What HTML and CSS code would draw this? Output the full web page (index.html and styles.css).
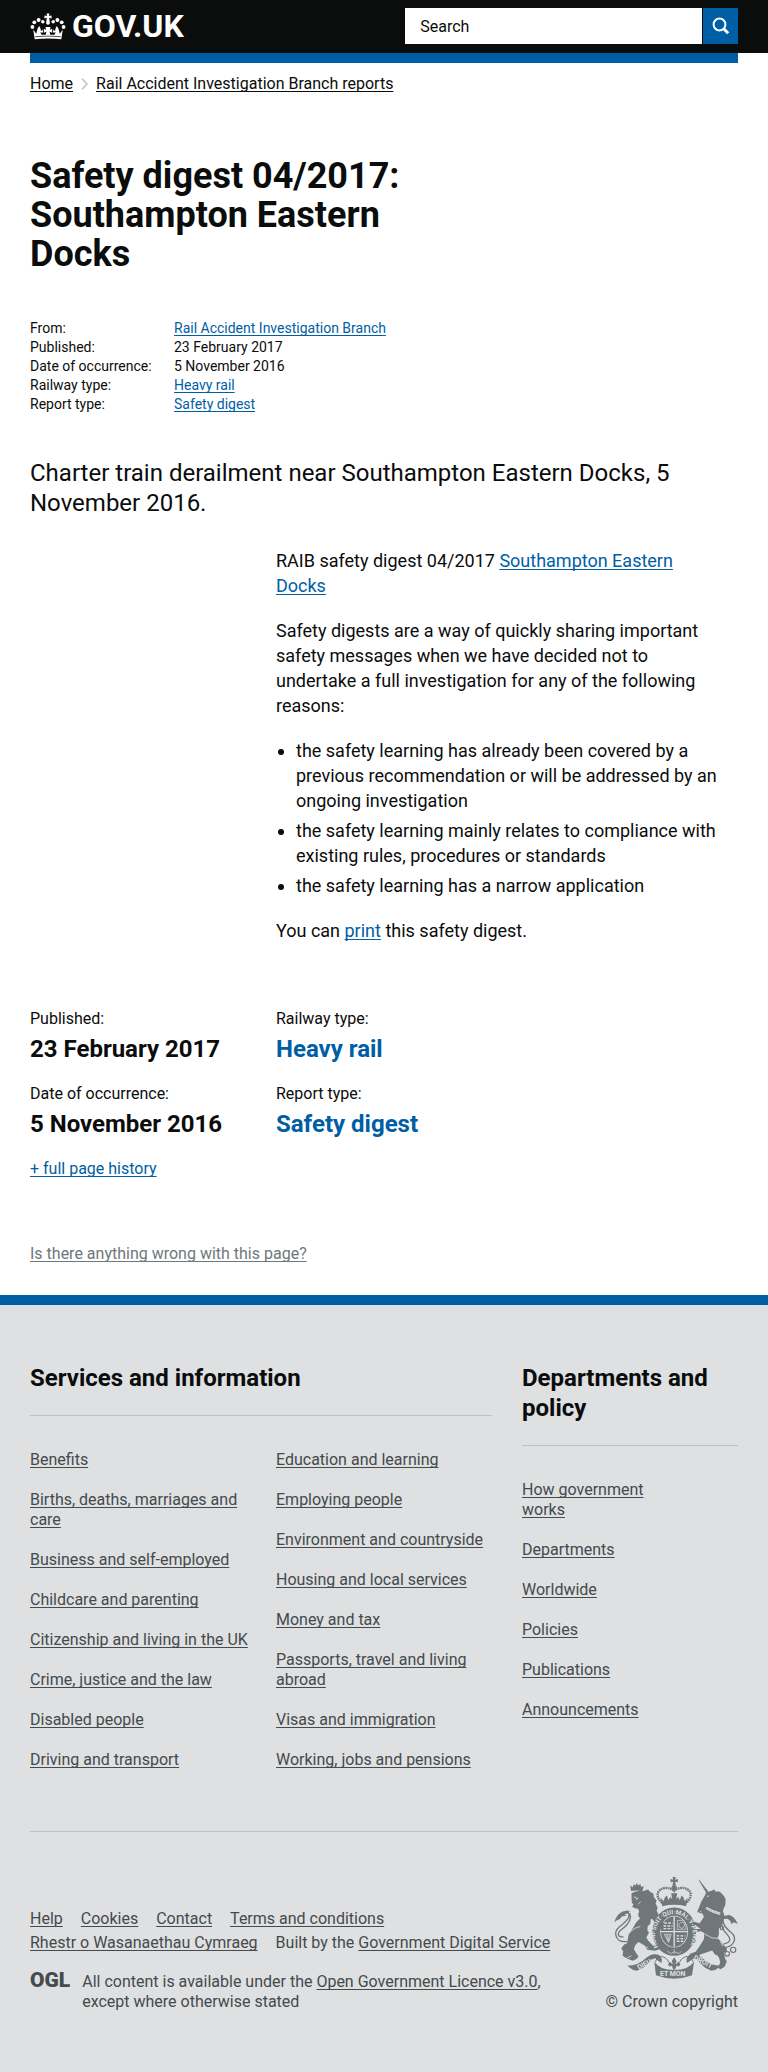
FILE: index.html
```html
<!DOCTYPE html>
<html lang="en">
<head>
<meta charset="utf-8">
<meta name="viewport" content="width=device-width, initial-scale=1">
<title>Safety digest 04/2017: Southampton Eastern Docks - GOV.UK</title>
<link rel="stylesheet" href="styles.css">
</head>
<body>
<header class="site-header">
  <div class="wrap header-inner">
    <a class="logo" href="#">
      <svg class="crown" viewBox="0 0 36 27" aria-hidden="true">
        <g fill="currentColor">
          <circle cx="2.4" cy="14" r="1.9"/><circle cx="4.3" cy="9.3" r="1.9"/><circle cx="8.6" cy="6.9" r="2"/><circle cx="12.8" cy="8.7" r="1.7"/>
          <circle cx="33.6" cy="14" r="1.9"/><circle cx="31.7" cy="9.3" r="1.9"/><circle cx="27.4" cy="6.9" r="2"/><circle cx="23.2" cy="8.7" r="1.7"/>
          <path d="M16.5.5h3l-.6 2.6 2.7-.7v3l-2.5-.6.7 4.5a1.9 1.9 0 1 1-3.6 0l.7-4.5-2.5.6v-3l2.7.7z"/>
          <path d="M3.2 16.5l3 4.2 1.4-5.2 1.6-2.5 1.3 2.6.4 2.5 2-1.4v3l-2.5-.5 1.1 2.6h4.2l.6-3.1-2.5 1v-4l2.3 1-.6-2.7h5l-.6 2.7 2.3-1v4l-2.5-1 .6 3.1h4.2l1.1-2.6-2.5.5v-3l2 1.4.4-2.5 1.3-2.6 1.6 2.5 1.4 5.2 3-4.2-1.5 9.7Q18 24.700 4.700 26.200z"/>
        </g>
        <path d="M5.200 23.700Q18 22.500 30.800 23.700" stroke="#0b0c0c" stroke-width=".7" fill="none"/>
      </svg>
      <span>GOV.UK</span>
    </a>
    <form class="search" role="search">
      <input type="search" aria-label="Search" placeholder="Search">
      <button type="button" aria-label="Search">
        <svg viewBox="0 0 18 18" aria-hidden="true"><circle cx="7.500" cy="7.500" r="5.900"/><path d="M11.500 11.500L16.200 16.200" class="handle"/></svg>
      </button>
    </form>
  </div>
</header>
<div class="wrap">
  <div class="header-bar"></div>
  <nav class="breadcrumbs" aria-label="Breadcrumb">
    <a href="#">Home</a>
    <svg viewBox="0 0 7 12" aria-hidden="true"><path d="M1 .8L6 6 1 11.200"/></svg>
    <a href="#">Rail Accident Investigation Branch reports</a>
  </nav>
  <main>
    <h1>Safety digest 04/2017: Southampton Eastern Docks</h1>
    <dl class="metadata">
      <dt>From:</dt><dd><a href="#">Rail Accident Investigation Branch</a></dd>
      <dt>Published:</dt><dd>23 February 2017</dd>
      <dt>Date of occurrence:</dt><dd>5 November 2016</dd>
      <dt>Railway type:</dt><dd><a href="#">Heavy rail</a></dd>
      <dt>Report type:</dt><dd><a href="#">Safety digest</a></dd>
    </dl>
    <p class="lead">Charter train derailment near Southampton Eastern Docks, 5 November 2016.</p>
    <div class="thirds">
      <div class="govspeak">
        <p>RAIB safety digest 04/2017 <a href="#">Southampton Eastern Docks</a></p>
        <p>Safety digests are a way of quickly sharing important safety messages when we have decided not to undertake a full investigation for any of the following reasons:</p>
        <ul>
          <li>the safety learning has already been covered by a previous recommendation or will be addressed by an ongoing investigation</li>
          <li>the safety learning mainly relates to compliance with existing rules, procedures or standards</li>
          <li>the safety learning has a narrow application</li>
        </ul>
        <p>You can <a href="#">print</a> this safety digest.</p>
      </div>
    </div>
    <dl class="thirds facts">
      <div><dt>Published:</dt><dd>23 February 2017</dd></div>
      <div class="last"><dt>Railway type:</dt><dd><a href="#">Heavy rail</a></dd></div>
      <div><dt>Date of occurrence:</dt><dd>5 November 2016</dd></div>
      <div class="last"><dt>Report type:</dt><dd><a href="#">Safety digest</a></dd></div>
    </dl>
    <p class="history"><a href="#">+ full page history</a></p>
  </main>
  <p class="report"><a href="#">Is there anything wrong with this page?</a></p>
</div>
<footer class="site-footer">
  <div class="wrap">
    <div class="thirds categories">
      <section class="services">
        <h2>Services and information</h2>
        <div class="halves">
          <ul>
            <li><a href="#">Benefits</a></li>
            <li><a href="#">Births, deaths, marriages and care</a></li>
            <li><a href="#">Business and self-employed</a></li>
            <li><a href="#">Childcare and parenting</a></li>
            <li><a href="#">Citizenship and living in the UK</a></li>
            <li><a href="#">Crime, justice and the law</a></li>
            <li><a href="#">Disabled people</a></li>
            <li><a href="#">Driving and transport</a></li>
          </ul>
          <ul>
            <li><a href="#">Education and learning</a></li>
            <li><a href="#">Employing people</a></li>
            <li><a href="#">Environment and countryside</a></li>
            <li><a href="#">Housing and local services</a></li>
            <li><a href="#">Money and tax</a></li>
            <li><a href="#">Passports, travel and living abroad</a></li>
            <li><a href="#">Visas and immigration</a></li>
            <li><a href="#">Working, jobs and pensions</a></li>
          </ul>
        </div>
      </section>
      <section class="departments">
        <h2>Departments and policy</h2>
        <ul>
          <li><a href="#">How government works</a></li>
          <li><a href="#">Departments</a></li>
          <li><a href="#">Worldwide</a></li>
          <li><a href="#">Policies</a></li>
          <li><a href="#">Publications</a></li>
          <li><a href="#">Announcements</a></li>
        </ul>
      </section>
    </div>
    <div class="meta">
      <div class="meta-inner">
        <ul class="meta-links">
          <li><a href="#">Help</a></li>
          <li><a href="#">Cookies</a></li>
          <li><a href="#">Contact</a></li>
          <li><a href="#">Terms and conditions</a></li>
          <li><a href="#">Rhestr o Wasanaethau Cymraeg</a></li>
          <li>Built by the <a href="#">Government Digital Service</a></li>
        </ul>
        <div class="licence">
          <a class="ogl" href="#">OGL</a>
          <p>All content is available under the <a href="#">Open Government Licence v3.0</a>, except where otherwise stated</p>
        </div>
      </div>
      <div class="copyright">
        <svg class="arms" viewBox="68 50 376 308" aria-hidden="true">
          <g fill="currentColor">
            <!-- lion -->
            <path d="M122 92L119 76l8 5 3-9 6 4 3-9 4 9 7-5 2 9 8-3-4 17q-17-6-34-2z"/>
            <path d="M123 99q16-9 34-6l16-5 8 8 8 4 2 12 8 9-3 9 6 13-3 9 5 10 3 14 10 8 5 15-6 11-10-2-4-9-7-2-6-17-7-5-2 16-8 8-1 12 5 7-8 14 5 10 14 14 14-6 7 5-2 14-12 4-23-3-9-14-18-10-9 9-5 12 6 11 8 11-4 7-12 7-20-7-12-9 2-13-6-8 9-12 9-4 4-25 14-22 10-17 11-11-6-9 3-13-4-8-7 0-10-5 4-7-5-6z"/>
            <path d="M75 176q8-16 22-22l14-3 8 4-9 6-8 1 6 4-14 3-6 8-10 4-7 6z"/>
            <!-- unicorn -->
            <path d="M324 56l6 5 24 31-6 5z"/>
            <path d="M334 124l11-19 5-12 8 1 9-3 6-4 3 7 13 0 11 10 7 12 0 16-8 20 4 12-2 18-7 16-7 8 0 17-4 11 12 14 8 8 8 11 0 8-9 4 4 18 5 8-7 16-13 8-6-6 6-15-5-20-11-4-8-12-21 7-15 5-14 12-15 3-9-4 7-13 17-6 17-25 8-14 1-18-11-5-14 2-4 17 5 11-8 6-8-10 0-28 13-5 16 0-17-12-15 0-12-5 0-9 14-3 13 8 14 4 13-20-9-17-12 4z"/>
            <path d="M403 170q13-10 22-2 12 7 19 24l-12-5-8 5-2-9-9-7-10 1z"/>
          </g>
          <g fill="none" stroke="currentColor">
            <path stroke-width="4" d="M110 245C73 249 67 216 87 200C116 178 122 165 110 154M99 231C79 232 79 219 94 208C115 192 125 176 118 160"/>
            <path stroke-width="4" d="M404 264C440 256 441 230 422 216C402 200 391 178 407 166M402 252C426 248 423 235 410 221C391 201 391 178 408 170"/>
            <g stroke-width="3.500"><circle cx="334" cy="151" r="7"/><circle cx="347" cy="155" r="5"/><circle cx="396" cy="204" r="5"/><circle cx="377" cy="269" r="6"/><circle cx="392" cy="285" r="7"/><circle cx="412" cy="282" r="7"/><circle cx="430" cy="270" r="8"/></g>
            <path stroke="#dee0e2" stroke-width="7" d="M348 143q23 14 43 18"/>
            <path stroke-width="2" stroke-dasharray="4 4" d="M348 143q23 14 43 18"/>
            <path stroke="#dee0e2" stroke-width="2.500" d="M130 110l13 5-7 3M143 132l8-8M111 223l22-18 17-6M105 297l18-9M166 260l8 5M351 109l7-2M344 222l22 12 19 1M392 246l7 13"/>
            <!-- royal crown -->
            <path stroke-width="7" stroke-dasharray="5 2" d="M216 128C191 107 203 85 225 83Q244 83 252 92Q260 83 279 83C301 85 313 107 288 128"/>
          </g>
          <g fill="currentColor">
            <circle cx="252" cy="82" r="8"/><path d="M247 50h10l-2 8 8-2v10l-8-2 2 11h-10l2-11-8 2v-10l8 2z"/>
            <path d="M211 113l9 10 4-12 6-5 5 14 5-10 6 7-3-18h18l-3 18 6-7 5 10 5-14 6 5 4 12 9-10-5 25q-36-9-72 0z"/>
            <path fill-rule="evenodd" d="M252 142a66 73 0 1 1 0 146a66 73 0 1 1 0-146zm0 25a42 48 0 1 0 0 96a42 48 0 1 0 0-96z"/>
            <ellipse cx="252" cy="215" rx="40" ry="46"/>
          </g>
          <path fill="none" stroke="#dee0e2" stroke-width="4" d="M252 169v92M212 215h80"/>
          <path fill="none" stroke="#dee0e2" stroke-width="4" stroke-dasharray="8 4" d="M222 189h25M220 198h27M220 206h26M259 228h27M259 236h26M260 244h20"/>
          <path fill="none" stroke="#dee0e2" stroke-width="2" d="M262 181h19q9 12 7 27h-27zM267 201q-3-13 8-14t7 14q-7 8-15 0zM222 223l21 0-8 25zM226 224l9 20M231 224l5 18M237 224l0 17"/>
          <path id="garter" fill="none" d="M205 263A57 64 0 1 1 298 263"/>
          <text class="motto"><textPath href="#garter" startOffset="2">HONI·SOIT·QUI·MAL·Y·PENSE</textPath></text>
          <path fill="none" stroke="#dee0e2" stroke-width="2" d="M231 273l10 8 12-5 14 5 7-7M252 268v14"/>
          <!-- motto ribbon -->
          <g fill="currentColor">
            <path d="M110 318q34 0 58-24 10-10 25-11 18-1 22 16l-1 11-12-8-6-7-13 4q-19 26-44 34l-12-3z"/>
            <path d="M394 318q-34 0-58-24-10-10-25-11-18-1-22 16l1 11 12-8 6-7 13 4q19 26 44 34l12-3z"/>
            <path d="M192 305q16 26 60 26t60-26l-6 42q-54 21-109 0z"/>
            <path d="M252 292l7 12-3 10 9-8 6 8-5 6-7-2-4 11h-6l-4-11-7 2-5-6 6-8 9 8-3-10z"/>
          </g>
          <g fill="none" stroke="currentColor" stroke-width="3"><path d="M195 306q3-14 18-16 16 2 23 18M309 306q-3-14-18-16-16 2-23 18"/></g>
          <g class="ribbon-text"><text transform="translate(145 330) rotate(-27)">DIEU</text><text x="209" y="350">ET MON</text><text transform="translate(309 298) rotate(28)">DROIT</text></g>
        </svg>
        <a href="#">© Crown copyright</a>
      </div>
    </div>
  </div>
</footer>
</body>
</html>
```

FILE: styles.css
```css
* { box-sizing: border-box; }

body {
  margin: 0;
  background: #fff;
  color: #0b0c0c;
  font-family: Roboto, "Liberation Sans", sans-serif;
  font-size: 16px;
  line-height: 20px;
}

h1, h2, p, ul, dl, dd { margin: 0; padding: 0; }

a {
  color: #005ea5;
  text-decoration: underline;
  text-decoration-thickness: 1px;
  text-underline-offset: 2px;
  text-decoration-skip-ink: none;
}

.wrap {
  max-width: 1020px;
  margin: 0 auto;
  padding: 0 30px;
}

.thirds {
  display: grid;
  grid-template-columns: repeat(3, minmax(0, 1fr));
  column-gap: 30px;
}

/* Header */
.site-header { background: #0b0c0c; }

.header-inner {
  display: flex;
  justify-content: space-between;
  align-items: center;
  padding-top: 8px;
  padding-bottom: 9px;
}

.logo {
  display: flex;
  align-items: center;
  gap: 6px;
  color: #fff;
  font-size: 32px;
  font-weight: 700;
  line-height: 36px;
  text-decoration: none;
}

.crown { width: 36px; height: 27px; }

.search {
  display: flex;
  gap: 1px;
  width: 47%;
}

.search input {
  flex: 1;
  min-width: 0;
  height: 36px;
  margin: 0;
  padding: 0 15px;
  border: 0;
  border-radius: 0;
  background: #fff;
  color: #0b0c0c;
  font: inherit;
  appearance: none;
}

.search input::placeholder { color: #0b0c0c; opacity: 1; }

.search button {
  display: grid;
  place-items: center;
  width: 35px;
  height: 36px;
  padding: 0;
  border: 0;
  background: #005ea5;
}

.search svg {
  width: 18px;
  height: 18px;
  fill: none;
  stroke: #fff;
  stroke-width: 2;
}

.search .handle { stroke-width: 3; }

.header-bar { height: 10px; background: #005ea5; }

.breadcrumbs {
  display: flex;
  align-items: center;
  gap: 8px;
  padding-top: 11px;
}

.breadcrumbs a { color: #0b0c0c; }

.breadcrumbs svg {
  width: 7px;
  height: 12px;
  fill: none;
  stroke: #bfc1c3;
  stroke-width: 1.5;
}

/* Document */
h1 {
  max-width: 400px;
  margin-top: 63px;
  font-size: 36px;
  line-height: 39px;
}

.metadata {
  display: grid;
  grid-template-columns: 144px 1fr;
  margin-top: 45px;
  font-size: 14px;
  line-height: 19px;
}

.lead {
  margin-top: 44px;
  font-size: 24px;
  line-height: 30px;
}

.govspeak {
  grid-column: 2 / 4;
  display: flex;
  flex-direction: column;
  gap: 20px;
  margin-top: 30px;
  font-size: 18px;
  line-height: 25px;
}

.govspeak p, .govspeak li { max-width: 450px; }

.govspeak ul {
  display: flex;
  flex-direction: column;
  gap: 5px;
  padding-left: 20px;
}

.facts { row-gap: 20px; margin-top: 66px; }
.facts .last { grid-column: 2 / 4; }

.facts dd {
  margin-top: 5px;
  font-size: 24px;
  font-weight: 700;
  line-height: 30px;
}

.facts a { text-decoration: none; }
.history { margin-top: 20px; }
.report { padding: 65px 0 31px; }
.report a { color: #6f777b; }

/* Footer */
.site-footer {
  padding: 58px 0 60px;
  border-top: 10px solid #005ea5;
  background: #dee0e2;
  color: #454a4c;
}

.site-footer a { color: #454a4c; }
.site-footer ul { list-style: none; }
.services { grid-column: 1 / 3; }

h2 {
  padding-bottom: 22px;
  border-bottom: 1px solid #bfc1c3;
  color: #0b0c0c;
  font-size: 24px;
  line-height: 30px;
}

.categories ul {
  display: flex;
  flex-direction: column;
  gap: 20px;
}

.halves {
  display: grid;
  grid-template-columns: calc(50% - 5px) 1fr;
  column-gap: 20px;
  margin-top: 34px;
}

.departments ul { max-width: 140px; margin-top: 34px; }

.meta {
  display: flex;
  justify-content: space-between;
  align-items: flex-end;
  margin-top: 61px;
  padding-top: 45px;
  border-top: 1px solid #bfc1c3;
}

.meta-inner { max-width: 530px; }

.meta-links {
  display: flex;
  flex-wrap: wrap;
  column-gap: 18px;
  line-height: 24px;
}

.licence {
  display: flex;
  align-items: flex-start;
  gap: 12px;
  margin-top: 17px;
}

.licence .ogl {
  font-size: 21px;
  font-weight: 900;
  line-height: 16px;
  text-decoration: none;
}

.licence p { max-width: 460px; }

.copyright {
  display: flex;
  flex-direction: column;
  align-items: flex-end;
  gap: 13px;
}

.copyright a { text-decoration: none; }
.arms { width: 125px; height: 102px; color: #6f777b; }

.motto {
  fill: #dee0e2;
  font-size: 19px;
  font-weight: 700;
}

.ribbon-text {
  fill: #dee0e2;
  font-size: 21px;
  font-weight: 700;
}
```
